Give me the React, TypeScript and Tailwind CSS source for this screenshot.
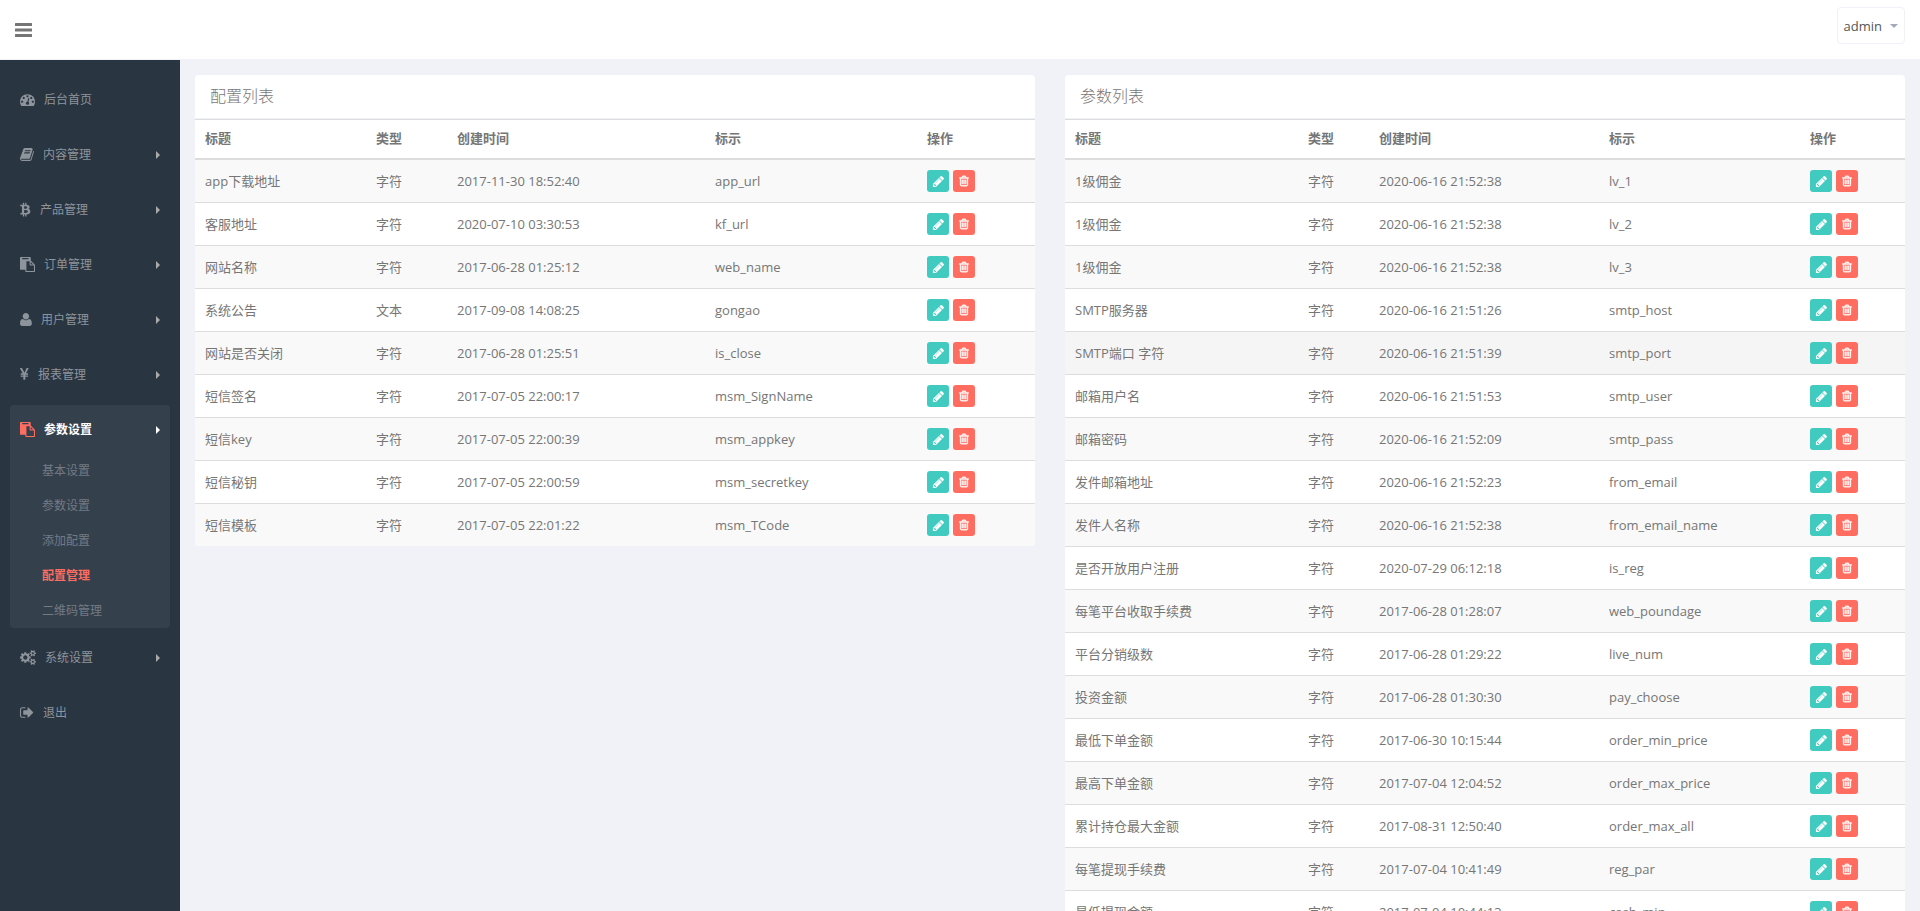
import React from "react";

type Glyph = { box: string; size: string; d: string };

const smallCog = (y: number) =>
  `M1856 ${y}v140q0 16-149 31-12 27-30 52 51 113 51 138 0 4-4 7-122 71-124 71-8 0-46-47t-52-68q-20 2-30 2t-30-2q-14 21-52 68t-46 47q-2 0-124-71-4-3-4-7 0-25 51-138-18-25-30-52-149-15-149-31v-140q0-16 149-31 13-29 30-52-51-113-51-138 0-4 4-7 4-2 35-20t59-34 30-16q8 0 46 46.5t52 67.5q20-2 30-2t30 2q51-71 92-112l6-2q4 0 124 70 4 3 4 7 0 25-51 138 17 23 30 52 149 15 149 31zm-256 70q0-52-38-90t-90-38-90 38-38 90q0 53 37.5 90.5t90.5 37.5 90.5-37.5 37.5-90.5z`;

const glyphs: Record<string, Glyph> = {
  dashboard: {
    box: "0 0 1792 1792",
    size: "w-[15px] h-[15px]",
    d: "M384 1152q0-53-37.5-90.5t-90.5-37.5-90.5 37.5-37.5 90.5 37.5 90.5 90.5 37.5 90.5-37.5 37.5-90.5zm192-448q0-53-37.5-90.5t-90.5-37.5-90.5 37.5-37.5 90.5 37.5 90.5 90.5 37.5 90.5-37.5 37.5-90.5zm428 481l101-382q6-26-7.5-48.5t-38.5-29.5-48 6.5-30 39.5l-101 382q-60 5-107 43.5t-63 98.5q-20 77 20 146t117 89 146-20 89-117q16-60-6-117t-72-91zm660-33q0-53-37.5-90.5t-90.5-37.5-90.5 37.5-37.5 90.5 37.5 90.5 90.5 37.5 90.5-37.5 37.5-90.5zm-640-640q0-53-37.5-90.5t-90.5-37.5-90.5 37.5-37.5 90.5 37.5 90.5 90.5 37.5 90.5-37.5 37.5-90.5zm448 192q0-53-37.5-90.5t-90.5-37.5-90.5 37.5-37.5 90.5 37.5 90.5 90.5 37.5 90.5-37.5 37.5-90.5zm320 448q0 261-141 483-19 29-54 29h-1402q-35 0-54-29-141-221-141-483 0-182 71-348t191-286 286-191 348-71 348 71 286 191 191 286 71 348z",
  },
  book: {
    box: "64 0 1672 1792",
    size: "w-[14px] h-[15px]",
    d: "M1703 478q40 57 18 129l-275 906q-19 64-76.5 107.5t-122.5 43.5h-923q-77 0-148.5-53.5t-99.5-131.5q-24-67-2-127 0-4 3-27t4-37q1-8-3-21.5t-3-19.5q2-11 8-21t16.5-23.5 16.5-23.5q23-38 45-91.5t30-91.5q3-10 .5-30t-.5-28q3-11 17-28t17-23q21-36 42-92t25-90q1-9-2.5-32t.5-28q4-13 22-30.5t22-22.5q19-26 42.5-84.5t27.5-96.5q1-8-3-25.5t-2-26.5q2-8 9-18t18-23 17-21q8-12 16.5-30.5t15-35 16-36 19.5-32 26.5-23.5 36-11.5 47.5 5.5l-1 3q38-9 51-9h761q74 0 114 56t18 130l-274 906q-36 119-71.5 153.5t-128.5 34.5h-869q-27 0-38 15-11 16-1 43 24 70 144 70h923q29 0 56-15.5t35-41.5l300-987q7-22 5-57 38 15 59 43zm-1064 2q-4 13 2 22.5t20 9.5h608q13 0 25.5-9.5t16.5-22.5l21-64q4-13-2-22.5t-20-9.5h-608q-13 0-25.5 9.5t-16.5 22.5zm-83 256q-4 13 2 22.5t20 9.5h608q13 0 25.5-9.5t16.5-22.5l21-64q4-13-2-22.5t-20-9.5h-608q-13 0-25.5 9.5t-16.5 22.5z",
  },
  bitcoin: {
    box: "256 0 1314 1792",
    size: "w-[11px] h-[15px]",
    d: "M1399.5 589q18 182-131 258 117 28 175 103t45 214q-7 71-32.5 125t-64.5 89-97 58.5-121.5 34.5-145.5 15v255h-154v-251q-80 0-122-1v252h-154v-255q-18 0-54-.5t-55-.5h-200l31-183h111q50 0 58-51v-402h16q-6-1-16-1v-287q-13-68-89-68h-111v-164l212 1q64 0 97-1v-252h154v247q82-2 122-2v-245h154v252q79 7 140 22.5t113 45 82.5 78 36.5 114.5zm-215 545q0-36-15-64t-37-46-57.5-30.5-65.5-18.5-74-9-69-3-64.5 1-47.5 1v338q8 0 37 .5t48 .5 53-1.5 58.5-4 57-8.5 55.5-14 47.5-21 39.5-30 24.5-40 9.5-51zm-71-476q0-33-12.5-58.5t-30.5-42-48-28-55-16.5-61.5-8-58-2.5-54 1-39.5.5v307q5 0 34.5.5t46.5 0 50-2 55-5.5 51.5-11 48.5-18.5 37-27 27-38.5 9-51z",
  },
  paste: {
    box: "0 0 1792 1792",
    size: "w-[15px] h-[15px]",
    d: "M768 1664h896v-640h-416q-40 0-68-28t-28-68v-416h-384v1152zm256-1440v-64q0-13-9.5-22.5t-22.5-9.5h-704q-13 0-22.5 9.5t-9.5 22.5v64q0 13 9.5 22.5t22.5 9.5h704q13 0 22.5-9.5t9.5-22.5zm256 672h299l-299-299v299zm512 128v672q0 40-28 68t-68 28h-960q-40 0-68-28t-28-68v-160h-544q-40 0-68-28t-28-68v-1344q0-40 28-68t68-28h1088q40 0 68 28t28 68v328q21 13 36 28l408 408q28 28 48 76t20 88z",
  },
  user: {
    box: "256 0 1408 1792",
    size: "w-[12px] h-[15px]",
    d: "M1664 1405q0 120-73 189.5t-194 69.5h-874q-121 0-194-69.5t-73-189.5q0-53 3.5-103.5t14-109 26.5-108.5 43-97.5 62-81 85.5-53.5 111.5-20q9 0 42 21.5t74.5 48 108 48 133.5 21.5 133.5-21.5 108-48 74.5-48 42-21.5q61 0 111.5 20t85.5 53.5 62 81 43 97.5 26.5 108.5 14 109 3.5 103.5zm-320-893q0 159-112.5 271.5t-271.5 112.5-271.5-112.5-112.5-271.5 112.5-271.5 271.5-112.5 271.5 112.5 112.5 271.5z",
  },
  yen: {
    box: "382 0 1075 1792",
    size: "w-[9px] h-[15px]",
    d: "M985.5 1536h-172q-13 0-22.5-9t-9.5-23v-330h-288q-13 0-22.5-9t-9.5-23v-103q0-13 9.5-22.5t22.5-9.5h288v-85h-288q-13 0-22.5-9t-9.5-23v-104q0-13 9.5-22.5t22.5-9.5h214l-321-578q-8-16 0-32 10-16 28-16h194q19 0 29 18l215 425q19 38 56 125 10-24 30.5-68t27.5-61l191-420q8-19 29-19h191q17 0 27 16 9 14 1 31l-313 579h215q13 0 22.5 9.5t9.5 22.5v104q0 14-9.5 23t-22.5 9h-290v85h290q13 0 22.5 9.5t9.5 22.5v103q0 14-9.5 23t-22.5 9h-290v330q0 13-9.5 22.5t-22.5 9.5z",
  },
  cogs: {
    box: "-64 0 1920 1792",
    size: "w-[16px] h-[15px]",
    d:
      "M832 896q0-106-75-181t-181-75-181 75-75 181 75 181 181 75 181-75 75-181zm384-91v185q0 10-7 19.5t-16 10.5l-155 24q-11 35-32 76 34 48 90 115 7 11 7 20 0 12-7 19-23 30-82.5 89.5t-78.5 59.5q-11 0-21-7l-115-90q-37 19-77 31-11 108-23 155-7 24-30 24h-186q-11 0-20-7.5t-10-17.5l-23-153q-34-10-75-31l-118 89q-7 7-20 7-11 0-21-8-144-133-144-160 0-9 7-19 10-14 41-53t47-61q-23-44-35-82l-152-24q-10-1-17-9.5t-7-19.5v-185q0-10 7-19.5t16-10.5l155-24q11-35 32-76-34-48-90-115-7-11-7-20 0-12 7-20 22-30 82-89t79-59q11 0 21 7l115 90q34-18 77-32 11-108 23-154 7-24 30-24h186q11 0 20 7.5t10 17.5l23 153q34 10 75 31l118-89q8-7 20-7 11 0 21 8 144 133 144 160 0 8-7 19-12 16-42 54t-45 60q23 48 34 82l152 23q10 2 17 10.5t7 19.5z" +
      smallCog(1338) +
      smallCog(314),
  },
  signOut: {
    box: "64 0 1672 1792",
    size: "w-[14px] h-[15px]",
    d: "M704 1440q0 4 1 20t.5 26.5-3 23.5-10 19.5-20.5 6.5h-320q-119 0-203.5-84.5t-84.5-203.5v-704q0-119 84.5-203.5t203.5-84.5h320q13 0 22.5 9.5t9.5 22.5q0 4 1 20t.5 26.5-3 23.5-10 19.5-20.5 6.5h-320q-66 0-113 47t-47 113v704q0 66 47 113t113 47h312l11.5 1 11.5 3 8 5.5 7 9 2 13.5zm928-544q0 26-19 45l-544 544q-19 19-45 19t-45-19-19-45v-288h-448q-26 0-45-19t-19-45v-384q0-26 19-45t45-19h448v-288q0-26 19-45t45-19 45 19l544 544q19 19 19 45z",
  },
  pencil: {
    box: "0 0 1792 1792",
    size: "w-[13px] h-[13px]",
    d: "M491 1536l91-91-235-235-91 91v107h128v128h107zm523-928q0-22-22-22-10 0-17 7l-542 542q-7 7-7 17 0 22 22 22 10 0 17-7l542-542q7-7 7-17zm-54-192l416 416-832 832h-416v-416zm683 96q0 53-37 90l-166 166-416-416 166-165q36-38 90-38 53 0 91 38l235 234q37 39 37 91z",
  },
  trash: {
    box: "0 0 1792 1792",
    size: "w-[12px] h-[12px]",
    d: "M704 736v576q0 14-9 23t-23 9h-64q-14 0-23-9t-9-23v-576q0-14 9-23t23-9h64q14 0 23 9t9 23zm256 0v576q0 14-9 23t-23 9h-64q-14 0-23-9t-9-23v-576q0-14 9-23t23-9h64q14 0 23 9t9 23zm256 0v576q0 14-9 23t-23 9h-64q-14 0-23-9t-9-23v-576q0-14 9-23t23-9h64q14 0 23 9t9 23zm128 724v-948h-896v948q0 22 7 40.5t14.5 27 10.5 8.5h832q3 0 10.5-8.5t14.5-27 7-40.5zm-672-1076h448l-48-117q-7-9-17-11h-317q-10 2-17 11zm928 32v64q0 14-9 23t-23 9h-96v948q0 83-47 143.5t-113 60.5h-832q-66 0-113-58.5t-47-141.5v-952h-96q-14 0-23-9t-9-23v-64q0-14 9-23t23-9h309l70-167q15-37 54-63t79-26h320q40 0 79 26t54 63l70 167h309q14 0 23 9t9 23z",
  },
};

function Icon({ name, className = "" }: { name: string; className?: string }) {
  const g = glyphs[name];
  return (
    <svg
      aria-hidden="true"
      viewBox={g.box}
      preserveAspectRatio="xMinYMid meet"
      className={`${g.size} shrink-0 fill-current ${className}`}
    >
      <path d={g.d} />
    </svg>
  );
}

type MenuItem = { label: string; icon: string; leaf?: boolean; children?: string[] };

const menu: MenuItem[] = [
  { label: "后台首页", icon: "dashboard", leaf: true },
  { label: "内容管理", icon: "book" },
  { label: "产品管理", icon: "bitcoin" },
  { label: "订单管理", icon: "paste" },
  { label: "用户管理", icon: "user" },
  { label: "报表管理", icon: "yen" },
  {
    label: "参数设置",
    icon: "paste",
    children: ["基本设置", "参数设置", "添加配置", "配置管理", "二维码管理"],
  },
  { label: "系统设置", icon: "cogs" },
  { label: "退出", icon: "signOut", leaf: true },
];

function Sidebar() {
  return (
    <nav className="w-[180px] shrink-0 bg-[#2a3542] px-[10px] pt-[15px] text-xs">
      <ul className="flex flex-col gap-[5px]">
        {menu.map((item) => {
          const open = Boolean(item.children);
          return (
            <li key={item.label} className={open ? "rounded bg-[#35404d]" : ""}>
              <a
                href="#"
                className={`flex items-center gap-[9px] px-[10px] ${
                  open ? "h-[48px] pt-[2px] font-bold text-white" : "h-[50px] text-[#8d949b]"
                }`}
              >
                <Icon name={item.icon} className={open ? "mb-[2px] text-[#ff6c60]" : "mb-[2px]"} />
                <span>{item.label}</span>
                {!item.leaf && (
                  <svg
                    aria-hidden="true"
                    viewBox="0 0 4 8"
                    className={`ml-auto h-2 w-1 fill-current ${open ? "" : "text-[#aaaaaa]"}`}
                  >
                    <path d="M0 0L4 4L0 8Z" />
                  </svg>
                )}
              </a>
              {item.children && (
                <ul>
                  {item.children.map((child) => (
                    <li key={child}>
                      <a
                        href="#"
                        className={`flex h-[35px] items-center pl-8 ${
                          child === "配置管理" ? "font-bold text-[#ff6c60]" : "text-[#727b84]"
                        }`}
                      >
                        {child}
                      </a>
                    </li>
                  ))}
                </ul>
              )}
            </li>
          );
        })}
      </ul>
    </nav>
  );
}

type Row = [title: string, type: string, created: string, key: string];

const configRows: Row[] = [
  ["app下载地址", "字符", "2017-11-30 18:52:40", "app_url"],
  ["客服地址", "字符", "2020-07-10 03:30:53", "kf_url"],
  ["网站名称", "字符", "2017-06-28 01:25:12", "web_name"],
  ["系统公告", "文本", "2017-09-08 14:08:25", "gongao"],
  ["网站是否关闭", "字符", "2017-06-28 01:25:51", "is_close"],
  ["短信签名", "字符", "2017-07-05 22:00:17", "msm_SignName"],
  ["短信key", "字符", "2017-07-05 22:00:39", "msm_appkey"],
  ["短信秘钥", "字符", "2017-07-05 22:00:59", "msm_secretkey"],
  ["短信模板", "字符", "2017-07-05 22:01:22", "msm_TCode"],
];

const paramRows: Row[] = [
  ["1级佣金", "字符", "2020-06-16 21:52:38", "lv_1"],
  ["1级佣金", "字符", "2020-06-16 21:52:38", "lv_2"],
  ["1级佣金", "字符", "2020-06-16 21:52:38", "lv_3"],
  ["SMTP服务器", "字符", "2020-06-16 21:51:26", "smtp_host"],
  ["SMTP端口 字符", "字符", "2020-06-16 21:51:39", "smtp_port"],
  ["邮箱用户名", "字符", "2020-06-16 21:51:53", "smtp_user"],
  ["邮箱密码", "字符", "2020-06-16 21:52:09", "smtp_pass"],
  ["发件邮箱地址", "字符", "2020-06-16 21:52:23", "from_email"],
  ["发件人名称", "字符", "2020-06-16 21:52:38", "from_email_name"],
  ["是否开放用户注册", "字符", "2020-07-29 06:12:18", "is_reg"],
  ["每笔平台收取手续费", "字符", "2017-06-28 01:28:07", "web_poundage"],
  ["平台分销级数", "字符", "2017-06-28 01:29:22", "live_num"],
  ["投资金额", "字符", "2017-06-28 01:30:30", "pay_choose"],
  ["最低下单金额", "字符", "2017-06-30 10:15:44", "order_min_price"],
  ["最高下单金额", "字符", "2017-07-04 12:04:52", "order_max_price"],
  ["累计持仓最大金额", "字符", "2017-08-31 12:50:40", "order_max_all"],
  ["每笔提现手续费", "字符", "2017-07-04 10:41:49", "reg_par"],
  ["最低提现金额", "字符", "2017-07-04 10:44:13", "cash_min"],
];

const headings = ["标题", "类型", "创建时间", "标示", "操作"];

function Panel({
  title,
  rows,
  columns,
  active,
}: {
  title: string;
  rows: Row[];
  columns: string[];
  active?: string;
}) {
  return (
    <section className="min-w-0 flex-1 self-start overflow-hidden rounded bg-white">
      <h2 className="flex h-[44px] items-center border-b border-[#eff2f7] px-[15px] pb-[2px] text-base font-light text-[#7a7676]">
        {title}
      </h2>
      <table className="w-full table-fixed border-separate border-spacing-0 border-t border-[#dddddd] text-left">
        <colgroup>
          {columns.map((c) => (
            <col key={c} className={c} />
          ))}
        </colgroup>
        <thead>
          <tr className="h-[40px]">
            {headings.map((h) => (
              <th key={h} className="border-b-2 border-[#dddddd] px-[10px] pb-[2px] font-bold">
                {h}
              </th>
            ))}
          </tr>
        </thead>
        <tbody className="[&>tr:last-child>td]:border-b-0">
          {rows.map((row) => (
            <tr
              key={row[3]}
              className={`h-[43px] last:h-[42px] ${
                row[3] === active ? "bg-[#f5f5f5]" : "odd:bg-[#f9f9f9] hover:bg-[#f5f5f5]"
              }`}
            >
              {row.map((cell, i) => (
                <td key={i} className="border-b border-[#dddddd] px-[10px]">
                  {cell}
                </td>
              ))}
              <td className="border-b border-[#dddddd] px-[10px]">
                <div className="flex gap-1">
                  <button
                    type="button"
                    aria-label="编辑"
                    className="flex size-[22px] items-center justify-center rounded-[3px] bg-[#41cac0] text-white"
                  >
                    <Icon name="pencil" />
                  </button>
                  <button
                    type="button"
                    aria-label="删除"
                    className="flex size-[22px] items-center justify-center rounded-[3px] bg-[#ff6c60] text-white"
                  >
                    <Icon name="trash" className="stroke-current stroke-[60]" />
                  </button>
                </div>
              </td>
            </tr>
          ))}
        </tbody>
      </table>
    </section>
  );
}

export default function App() {
  return (
    <div className="flex h-screen flex-col overflow-hidden bg-[#f1f2f7] font-['Open_Sans','Noto_Sans_CJK_SC',sans-serif] text-[13px] leading-5 text-[#767676]">
      <header className="flex h-[60px] shrink-0 items-start justify-between border-b border-[#f1f2f7] bg-white px-[15px] pt-[7px]">
        <button type="button" aria-label="菜单" className="mt-4 text-[#757575]">
          <svg aria-hidden="true" viewBox="0 0 17 14" className="block h-[14px] w-[17px] fill-current">
            <rect width="17" height="3" rx="0.5" />
            <rect y="5.5" width="17" height="3" rx="0.5" />
            <rect y="11" width="17" height="3" rx="0.5" />
          </svg>
        </button>
        <button
          type="button"
          className="flex h-[37px] items-center gap-2 rounded border border-[#f1f2f7] px-[6px] text-[#555555]"
        >
          <span>admin</span>
          <svg aria-hidden="true" viewBox="0 0 8 4" className="h-1 w-2 fill-[#a4aaba]">
            <path d="M0 0H8L4 4Z" />
          </svg>
        </button>
      </header>
      <div className="flex min-h-0 flex-1">
        <Sidebar />
        <main className="flex min-w-0 flex-1 gap-[30px] p-[15px]">
          <Panel
            title="配置列表"
            rows={configRows}
            columns={["w-[171px]", "w-[81px]", "w-[258px]", "w-[212px]", "w-[118px]"]}
          />
          <Panel
            title="参数列表"
            rows={paramRows}
            columns={["w-[233px]", "w-[71px]", "w-[230px]", "w-[201px]", "w-[105px]"]}
            active="smtp_port"
          />
        </main>
      </div>
    </div>
  );
}
